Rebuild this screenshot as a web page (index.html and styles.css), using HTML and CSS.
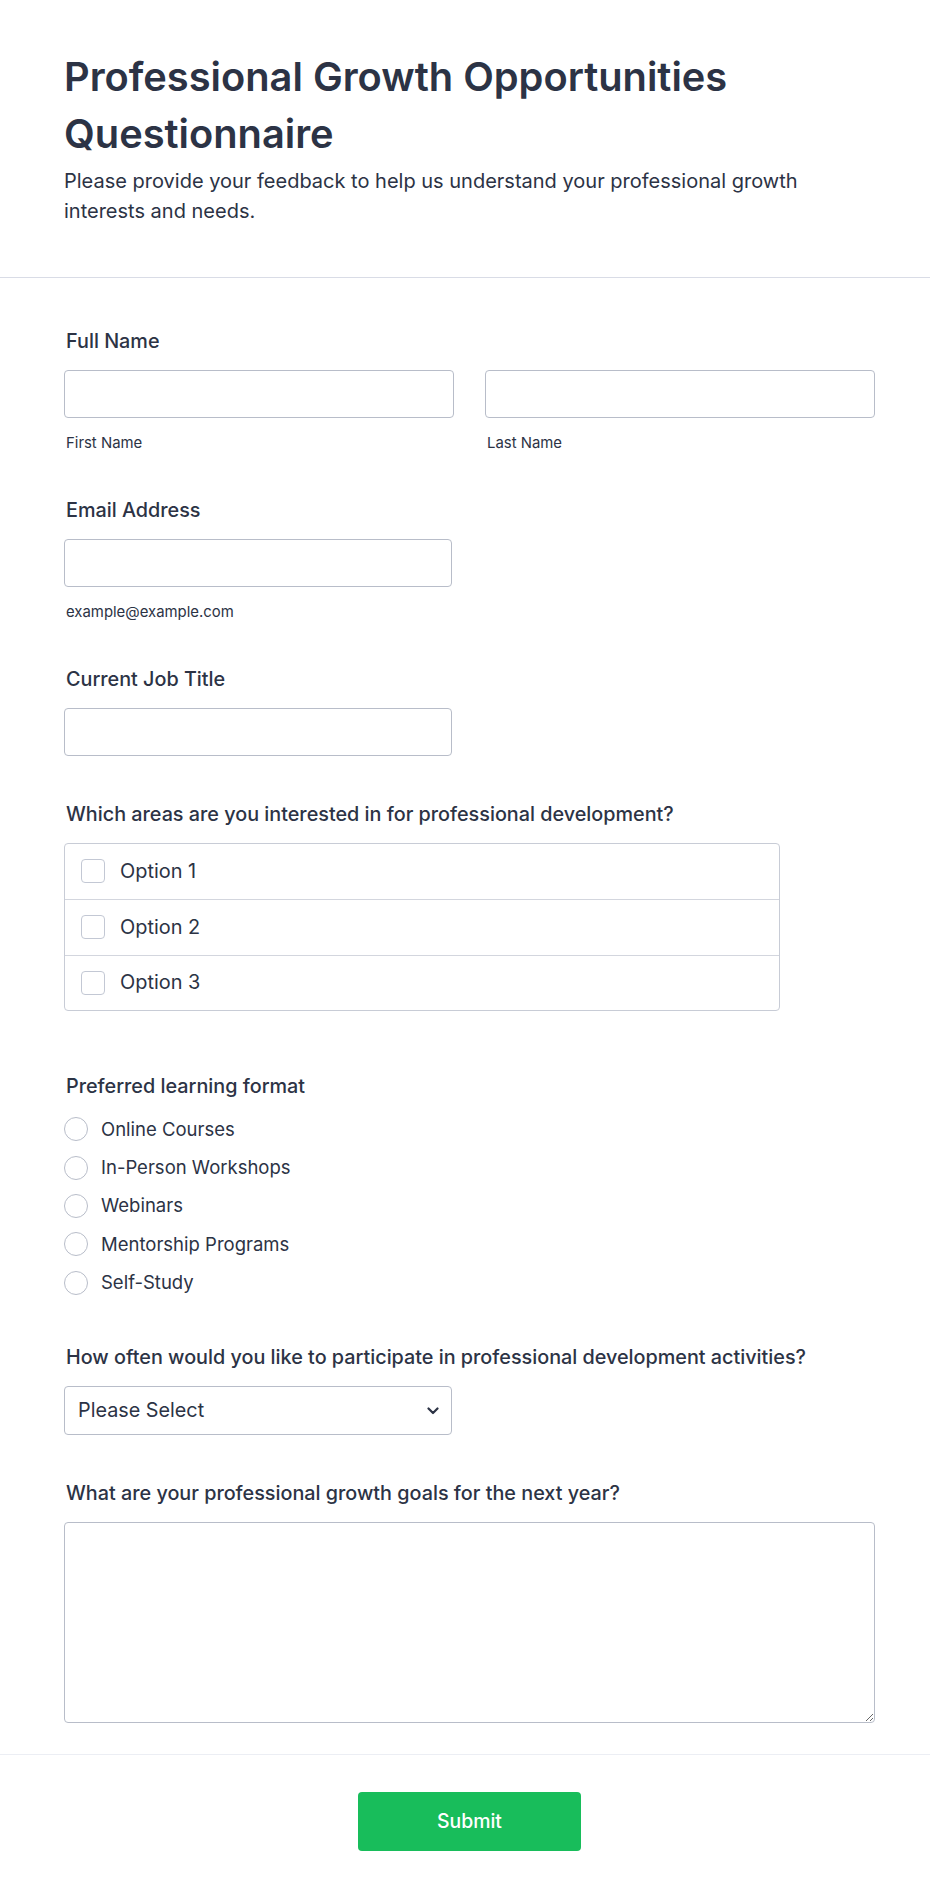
FILE: index.html
```html
<!DOCTYPE html>
<html lang="en">
<head>
<meta charset="utf-8">
<title>Professional Growth Opportunities Questionnaire</title>
<link rel="stylesheet" href="styles.css">
</head>
<body>
<div class="page">
  <header class="header">
    <h1 class="title">Professional Growth Opportunities Questionnaire</h1>
    <p class="subtitle">Please provide your feedback to help us understand your professional growth interests and needs.</p>
  </header>

  <form class="form">
    <div class="field">
      <label class="label">Full Name</label>
      <div class="name-row">
        <div class="name-col">
          <input class="input" type="text">
          <span class="sublabel">First Name</span>
        </div>
        <div class="name-col">
          <input class="input" type="text">
          <span class="sublabel">Last Name</span>
        </div>
      </div>
    </div>

    <div class="field">
      <label class="label">Email Address</label>
      <input class="input input-short" type="email">
      <span class="sublabel">example@example.com</span>
    </div>

    <div class="field">
      <label class="label">Current Job Title</label>
      <input class="input input-short" type="text">
    </div>

    <div class="field field-checks">
      <label class="label">Which areas are you interested in for professional development?</label>
      <div class="check-group">
        <label class="check-row"><input class="checkbox" type="checkbox"><span class="option-text">Option 1</span></label>
        <label class="check-row"><input class="checkbox" type="checkbox"><span class="option-text">Option 2</span></label>
        <label class="check-row"><input class="checkbox" type="checkbox"><span class="option-text">Option 3</span></label>
      </div>
    </div>

    <div class="field field-radios">
      <label class="label label-radios">Preferred learning format</label>
      <div class="radio-list">
        <label class="radio-row"><input class="radio" type="radio" name="format"><span class="radio-text">Online Courses</span></label>
        <label class="radio-row"><input class="radio" type="radio" name="format"><span class="radio-text">In-Person Workshops</span></label>
        <label class="radio-row"><input class="radio" type="radio" name="format"><span class="radio-text">Webinars</span></label>
        <label class="radio-row"><input class="radio" type="radio" name="format"><span class="radio-text">Mentorship Programs</span></label>
        <label class="radio-row"><input class="radio" type="radio" name="format"><span class="radio-text">Self-Study</span></label>
      </div>
    </div>

    <div class="field">
      <label class="label">How often would you like to participate in professional development activities?</label>
      <div class="select-wrap">
        <select class="select">
          <option>Please Select</option>
          <option>Weekly</option>
          <option>Monthly</option>
          <option>Quarterly</option>
          <option>Annually</option>
        </select>
        <svg class="chevron" width="12" height="8" viewBox="0 0 12 8" aria-hidden="true">
          <path d="M1.5 1.5 L6 6 L10.5 1.5" fill="none" stroke="#2c3345" stroke-width="2.2" stroke-linecap="round" stroke-linejoin="round"/>
        </svg>
      </div>
    </div>

    <div class="field field-last">
      <label class="label">What are your professional growth goals for the next year?</label>
      <textarea class="textarea"></textarea>
    </div>
  </form>

  <footer class="footer">
    <button class="submit" type="button">Submit</button>
  </footer>
</div>
</body>
</html>
```

FILE: styles.css
```css
* {
  box-sizing: border-box;
}

html, body {
  margin: 0;
  padding: 0;
  background: #ffffff;
}

body {
  font-family: Inter, "Noto Sans", "Liberation Sans", sans-serif;
  color: #2c3345;
}

.page {
  width: 930px;
  min-height: 1901px;
  background: #ffffff;
}

.header {
  padding: 48px 55px 51px 64px;
  border-bottom: 1px solid #d9dce6;
}

.title {
  margin: 0;
  font-size: 39.8px;
  line-height: 57px;
  font-weight: 600;
  color: #2c3345;
}

.subtitle {
  margin: 3.5px 0 0;
  font-size: 20px;
  line-height: 30px;
  color: #2c3345;
}

.form {
  padding: 51px 55px 31px 64px;
}

.field {
  display: flex;
  flex-direction: column;
  align-items: flex-start;
  margin-bottom: 46px;
}

.field-checks {
  margin-bottom: 63px;
}

.field-radios {
  margin-bottom: 43px;
}

.field-last {
  margin-bottom: 0;
  align-items: stretch;
}

.label {
  display: block;
  margin: 0 0 16px 2px;
  font-size: 19.8px;
  line-height: 25px;
  font-weight: 500;
  color: #2c3345;
}

.label-radios {
  margin-bottom: 11px;
}

.name-row {
  display: grid;
  grid-template-columns: 390px 390px;
  column-gap: 31px;
  width: 811px;
}

.name-col {
  display: flex;
  flex-direction: column;
}

.input {
  display: block;
  width: 100%;
  height: 48px;
  margin: 0;
  padding: 0 13px;
  border: 1px solid #b8bdc9;
  border-radius: 4px;
  background: #ffffff;
  font-family: inherit;
  font-size: 19.4px;
  color: #2c3345;
  outline: none;
}

.input-short {
  width: 388px;
}

.sublabel {
  display: block;
  margin: 16px 0 0 2px;
  font-size: 14.9px;
  line-height: 18px;
  color: #2c3345;
}

.check-group {
  width: 716px;
  border: 1px solid #c8ccd6;
  border-radius: 4px;
}

.check-row {
  display: flex;
  align-items: center;
  gap: 15px;
  height: 55.5px;
  padding-left: 16px;
  cursor: pointer;
}

.check-row + .check-row {
  border-top: 1px solid #d3d6de;
}

.checkbox {
  appearance: none;
  -webkit-appearance: none;
  flex: none;
  width: 24px;
  height: 24px;
  margin: 0;
  border: 1px solid #c3c8d4;
  border-radius: 4px;
  background: #ffffff;
}

.option-text {
  font-size: 19.9px;
  line-height: 25px;
  color: #2c3345;
}

.radio-list {
  display: flex;
  flex-direction: column;
}

.radio-row {
  display: flex;
  align-items: center;
  gap: 13px;
  height: 38.4px;
  cursor: pointer;
}

.radio-text {
  font-size: 18.5px;
  line-height: 25px;
  color: #2c3345;
}

.radio {
  appearance: none;
  -webkit-appearance: none;
  flex: none;
  width: 24px;
  height: 24px;
  margin: 0;
  border: 1px solid #b8bdc9;
  border-radius: 50%;
  background: #ffffff;
}

.select-wrap {
  position: relative;
  width: 388px;
  height: 49px;
}

.select {
  appearance: none;
  -webkit-appearance: none;
  display: block;
  width: 100%;
  height: 100%;
  margin: 0;
  padding: 0 36px 0 13px;
  border: 1px solid #b8bdc9;
  border-radius: 4px;
  background: #ffffff;
  font-family: inherit;
  font-size: 19.8px;
  color: #2c3345;
  outline: none;
}

.chevron {
  position: absolute;
  right: 13px;
  top: 21px;
  pointer-events: none;
}

.textarea {
  display: block;
  width: 811px;
  height: 201px;
  margin: 0;
  padding: 10px 13px;
  border: 1px solid #b8bdc9;
  border-radius: 4px;
  background: #ffffff;
  font-family: inherit;
  font-size: 19.4px;
  color: #2c3345;
  outline: none;
  resize: vertical;
}

.footer {
  display: flex;
  justify-content: center;
  padding: 37px 55px 50px 64px;
  border-top: 1px solid #eceef4;
}

.submit {
  width: 223px;
  height: 59px;
  margin: 0;
  border: none;
  border-radius: 4px;
  background: #18bd5b;
  color: #ffffff;
  font-family: inherit;
  font-size: 19.4px;
  font-weight: 500;
  cursor: pointer;
}
```
